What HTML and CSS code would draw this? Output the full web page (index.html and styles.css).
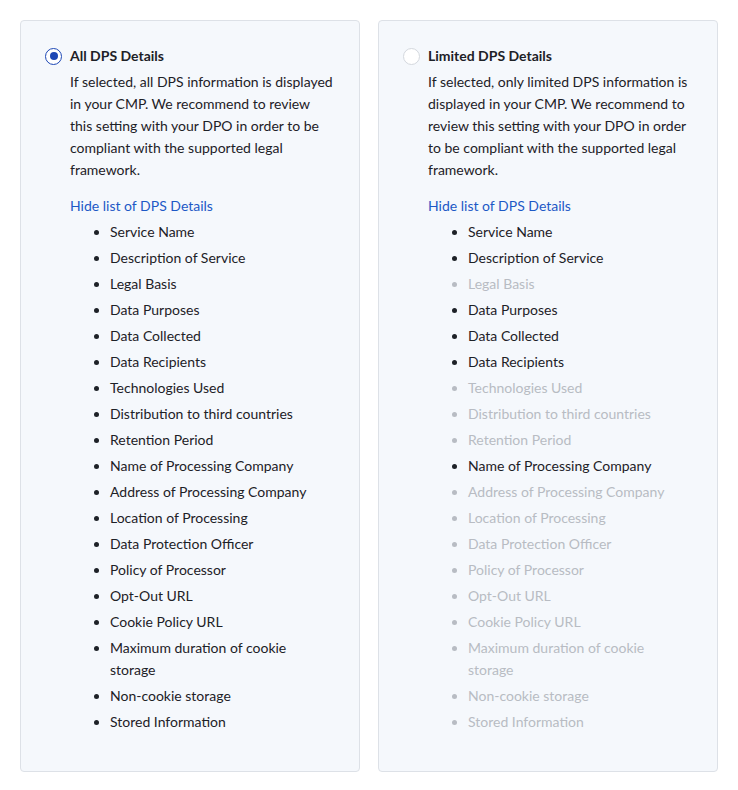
FILE: index.html
```html
<!DOCTYPE html>
<html lang="en">
<head>
<meta charset="utf-8">
<title>DPS Details</title>
<link rel="stylesheet" href="styles.css">
</head>
<body>
<div class="options">
  <div class="card">
    <div class="head">
      <span class="radio checked"></span>
      <span class="title">All DPS Details</span>
    </div>
    <div class="body">
      <p class="desc">If selected, all DPS information is displayed in your CMP. We recommend to review this setting with your DPO in order to be compliant with the supported legal framework.</p>
      <a class="toggle" href="#">Hide list of DPS Details</a>
      <ul class="list">
        <li>Service Name</li>
        <li>Description of Service</li>
        <li>Legal Basis</li>
        <li>Data Purposes</li>
        <li>Data Collected</li>
        <li>Data Recipients</li>
        <li>Technologies Used</li>
        <li>Distribution to third countries</li>
        <li>Retention Period</li>
        <li>Name of Processing Company</li>
        <li>Address of Processing Company</li>
        <li>Location of Processing</li>
        <li>Data Protection Officer</li>
        <li>Policy of Processor</li>
        <li>Opt-Out URL</li>
        <li>Cookie Policy URL</li>
        <li>Maximum duration of cookie storage</li>
        <li>Non-cookie storage</li>
        <li>Stored Information</li>
      </ul>
    </div>
  </div>
  <div class="card">
    <div class="head">
      <span class="radio"></span>
      <span class="title">Limited DPS Details</span>
    </div>
    <div class="body">
      <p class="desc">If selected, only limited DPS information is displayed in your CMP. We recommend to review this setting with your DPO in order to be compliant with the supported legal framework.</p>
      <a class="toggle" href="#">Hide list of DPS Details</a>
      <ul class="list">
        <li>Service Name</li>
        <li>Description of Service</li>
        <li class="off">Legal Basis</li>
        <li>Data Purposes</li>
        <li>Data Collected</li>
        <li>Data Recipients</li>
        <li class="off">Technologies Used</li>
        <li class="off">Distribution to third countries</li>
        <li class="off">Retention Period</li>
        <li>Name of Processing Company</li>
        <li class="off">Address of Processing Company</li>
        <li class="off">Location of Processing</li>
        <li class="off">Data Protection Officer</li>
        <li class="off">Policy of Processor</li>
        <li class="off">Opt-Out URL</li>
        <li class="off">Cookie Policy URL</li>
        <li class="off">Maximum duration of cookie storage</li>
        <li class="off">Non-cookie storage</li>
        <li class="off">Stored Information</li>
      </ul>
    </div>
  </div>
</div>
</body>
</html>
```

FILE: styles.css
```css
html, body {
  margin: 0;
  padding: 0;
  background: #ffffff;
}

body {
  font-family: "Lato", "Liberation Sans", sans-serif;
  font-size: 14px;
  line-height: 22px;
  color: #1d2127;
  padding: 20px;
}

.options {
  display: grid;
  grid-template-columns: 340px 340px;
  column-gap: 18px;
}

.card {
  background: #f5f8fc;
  border: 1px solid #dde1e7;
  border-radius: 4px;
  padding: 24px 24px 34px 24px;
}

.head {
  display: flex;
  align-items: center;
  gap: 8px;
  height: 22px;
}

.radio {
  box-sizing: border-box;
  width: 17px;
  height: 17px;
  border-radius: 50%;
  border: 1px solid #d4d8de;
  background: #ffffff;
  flex: none;
  display: flex;
  align-items: center;
  justify-content: center;
}

.radio.checked {
  border: 1.5px solid #1c47b5;
}

.radio.checked::after {
  content: "";
  width: 8px;
  height: 8px;
  border-radius: 50%;
  background: #1c47b5;
}

.title {
  font-weight: 700;
  color: #1d2127;
}

.body {
  padding-left: 25px;
  margin-top: 4px;
}

.desc {
  margin: 0;
  width: 264px;
}

.toggle {
  display: block;
  margin-top: 14px;
  color: #1d59c6;
  text-decoration: none;
}

.list {
  margin: 4px 0 0 0;
  padding-left: 40px;
}

.list li {
  margin-bottom: 4px;
}

.list li.off {
  color: #b8bcc3;
}
```
